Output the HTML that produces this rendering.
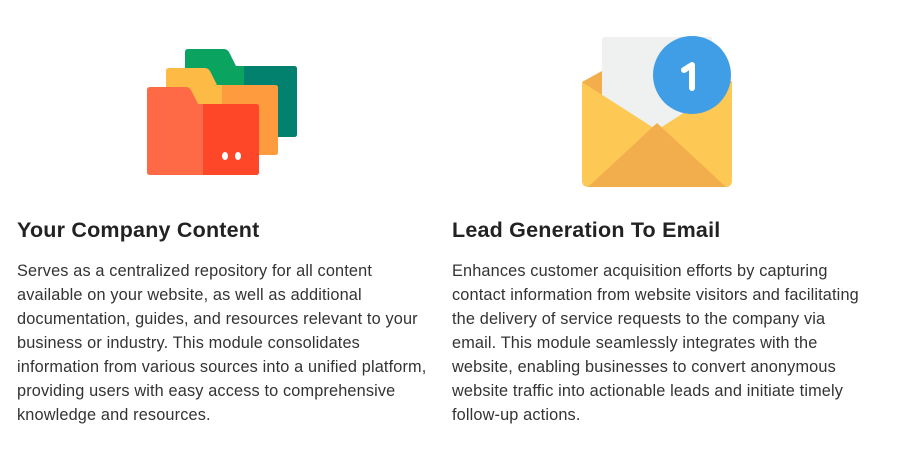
<!DOCTYPE html>
<html><head><style>
body{margin:0;width:914px;height:465px;background:#fff;font-family:"Liberation Sans",sans-serif;color:#222;position:relative;overflow:hidden}
h2{position:absolute;margin:0;font-size:21.5px;font-weight:bold;color:#222;top:218px;letter-spacing:0.2px}
p{position:absolute;margin:0;font-size:16.3px;line-height:24px;color:#333;top:259px;white-space:nowrap;letter-spacing:0.15px}
svg{position:absolute;left:0;top:0}
</style></head><body>
<svg width="914" height="200">
<path d="M188 49H224Q227 49 229 52L236 66H294Q297 66 297 69V134Q297 137 294 137H188Q185 137 185 134V52Q185 49 188 49Z" fill="#0aa360"/>
<path d="M244 66H294Q297 66 297 69V134Q297 137 294 137H244Z" fill="#01816e"/>
<path d="M169 68H205Q208 68 210 71L217 85H275Q278 85 278 88V152Q278 155 275 155H169Q166 155 166 152V71Q166 68 169 68Z" fill="#fdbb46"/>
<path d="M222 85H275Q278 85 278 88V152Q278 155 275 155H222Z" fill="#fe9b3f"/>
<path d="M150 87H186Q189 87 191 90L198 104H256Q259 104 259 107V172Q259 175 256 175H150Q147 175 147 172V90Q147 87 150 87Z" fill="#fe6a45"/>
<path d="M203 104H256Q259 104 259 107V172Q259 175 256 175H203Z" fill="#fe4628"/>
<ellipse cx="225" cy="156" rx="3" ry="4" fill="#fff"/>
<ellipse cx="238" cy="156" rx="3" ry="4" fill="#fff"/>
<path d="M582 82L640 50H700L732 82V180Q732 187 725 187H589Q582 187 582 180Z" fill="#f2ad4c"/>
<path d="M605 37H712V120L657 130L602 120V40Q602 37 605 37Z" fill="#eff0f0"/>
<path d="M582 82L657 130L732 82V179Q732 187 724 187H590Q582 187 582 179Z" fill="#fdc954"/>
<path d="M588 187L657 123L726 187Z" fill="#f2ad4c"/>
<circle cx="692" cy="75" r="39" fill="#409ee6"/>
<path d="M684 70L692 65V88" stroke="#fff" stroke-width="6" fill="none" stroke-linecap="round" stroke-linejoin="round"/>
</svg>
<h2 style="left:17px">Your Company Content</h2>
<p style="left:17px">Serves as a centralized repository for all content<br>available on your website, as well as additional<br>documentation, guides, and resources relevant to your<br>business or industry. This module consolidates<br>information from various sources into a unified platform,<br>providing users with easy access to comprehensive<br>knowledge and resources.</p>
<h2 style="left:452px">Lead Generation To Email</h2>
<p style="left:452px">Enhances customer acquisition efforts by capturing<br>contact information from website visitors and facilitating<br>the delivery of service requests to the company via<br>email. This module seamlessly integrates with the<br>website, enabling businesses to convert anonymous<br>website traffic into actionable leads and initiate timely<br>follow-up actions.</p>
</body></html>
